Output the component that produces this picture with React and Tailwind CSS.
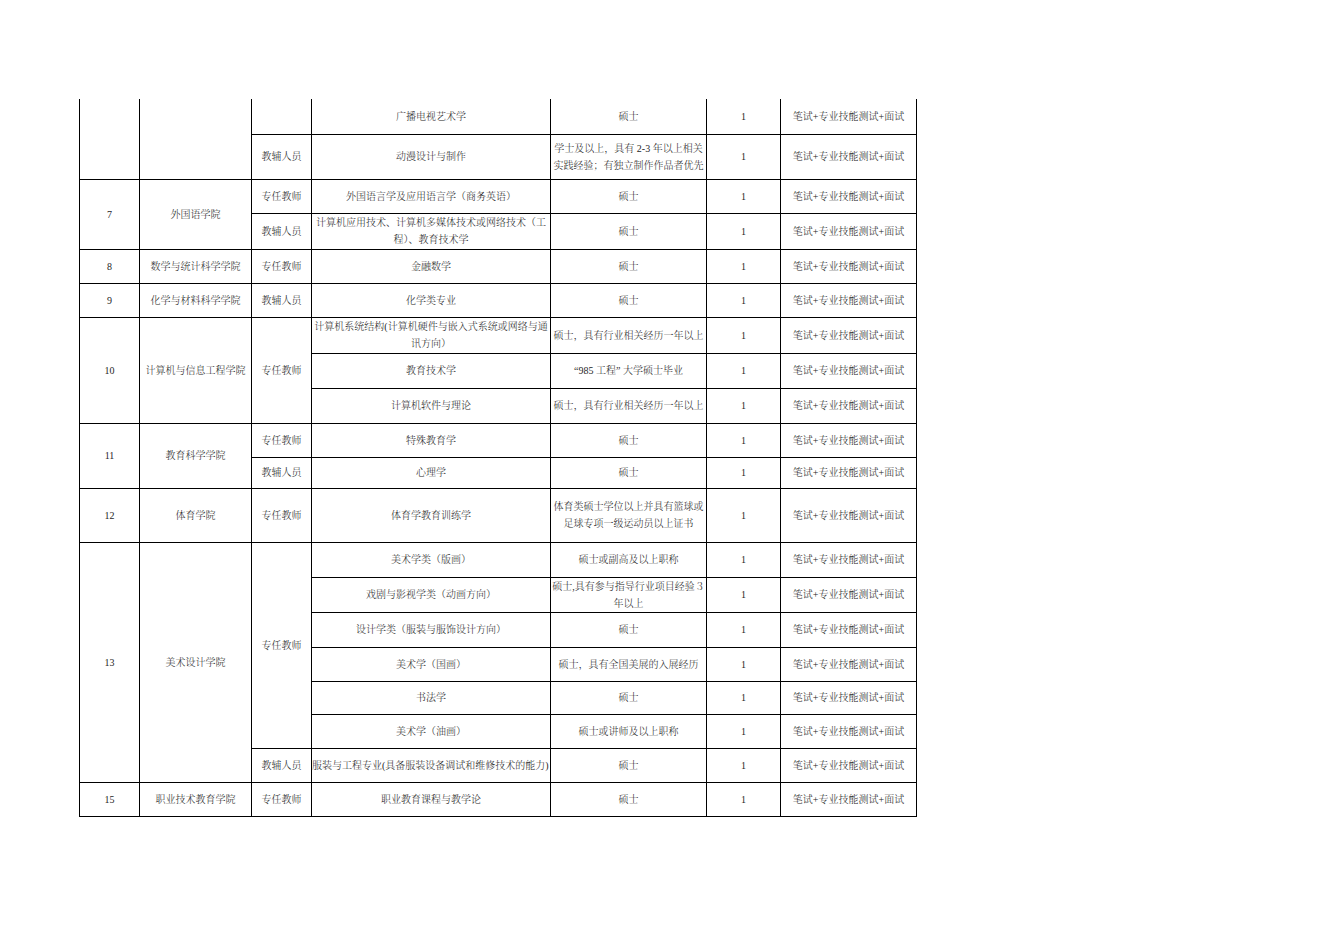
import React from "react";

const F = { fontFamily: '"Liberation Serif", "Noto Serif CJK SC", "Noto Sans CJK SC", serif' };
const EXAM = "笔试+专业技能测试+面试";

function C({ children, rs, top, cls = "" }) {
  return (
    <td
      rowSpan={rs}
      className={`border border-black p-0 text-center align-middle text-[10px] leading-[17px] whitespace-nowrap ${top ? "border-t-0" : ""} ${cls}`}
    >
      {children}
    </td>
  );
}

function Tail({ req, top }) {
  return (
    <>
      <C top={top}>{req}</C>
      <C top={top}>1</C>
      <C top={top}>{EXAM}</C>
    </>
  );
}

export default function App() {
  return (
    <div className="w-[1320px] h-[933px] bg-white overflow-hidden text-[#262626]" style={F}>
      <div className="pt-[99px] pl-[79px]">
        <table className="border-collapse table-fixed w-[837px] font-light">
          <colgroup>
            <col className="w-[60px]" />
            <col className="w-[112px]" />
            <col className="w-[60px]" />
            <col className="w-[239px]" />
            <col className="w-[156px]" />
            <col className="w-[74px]" />
            <col className="w-[136px]" />
          </colgroup>
          <tbody>
            <tr className="h-[35px]">
              <C rs={2} top></C>
              <C rs={2} top></C>
              <C top></C>
              <C top>广播电视艺术学</C>
              <Tail req="硕士" top />
            </tr>
            <tr className="h-[45px]">
              <C>教辅人员</C>
              <C>动漫设计与制作</C>
              <Tail req={<>学士及以上，具有 2-3 年以上相关<br />实践经验；有独立制作作品者优先</>} />
            </tr>
            <tr className="h-[34px]">
              <C rs={2}>7</C>
              <C rs={2}>外国语学院</C>
              <C>专任教师</C>
              <C>外国语言学及应用语言学（商务英语）</C>
              <Tail req="硕士" />
            </tr>
            <tr className="h-[36px]">
              <C>教辅人员</C>
              <C>计算机应用技术、计算机多媒体技术或网络技术（工<br />程）、教育技术学</C>
              <Tail req="硕士" />
            </tr>
            <tr className="h-[34px]">
              <C>8</C>
              <C>数学与统计科学学院</C>
              <C>专任教师</C>
              <C>金融数学</C>
              <Tail req="硕士" />
            </tr>
            <tr className="h-[34px]">
              <C>9</C>
              <C>化学与材料科学学院</C>
              <C>教辅人员</C>
              <C>化学类专业</C>
              <Tail req="硕士" />
            </tr>
            <tr className="h-[36px]">
              <C rs={3}>10</C>
              <C rs={3}>计算机与信息工程学院</C>
              <C rs={3}>专任教师</C>
              <C>计算机系统结构(计算机硬件与嵌入式系统或网络与通<br />讯方向）</C>
              <Tail req="硕士，具有行业相关经历一年以上" />
            </tr>
            <tr className="h-[35px]">
              <C>教育技术学</C>
              <Tail req="“985 工程” 大学硕士毕业" />
            </tr>
            <tr className="h-[35px]">
              <C>计算机软件与理论</C>
              <Tail req="硕士，具有行业相关经历一年以上" />
            </tr>
            <tr className="h-[34px]">
              <C rs={2}>11</C>
              <C rs={2}>教育科学学院</C>
              <C>专任教师</C>
              <C>特殊教育学</C>
              <Tail req="硕士" />
            </tr>
            <tr className="h-[31px]">
              <C>教辅人员</C>
              <C>心理学</C>
              <Tail req="硕士" />
            </tr>
            <tr className="h-[54px]">
              <C>12</C>
              <C>体育学院</C>
              <C>专任教师</C>
              <C>体育学教育训练学</C>
              <Tail req={<>体育类硕士学位以上并具有篮球或<br />足球专项一级运动员以上证书</>} />
            </tr>
            <tr className="h-[35px]">
              <C rs={7}>13</C>
              <C rs={7}>美术设计学院</C>
              <C rs={6}>专任教师</C>
              <C>美术学类（版画）</C>
              <Tail req="硕士或副高及以上职称" />
            </tr>
            <tr className="h-[35px]">
              <C>戏剧与影视学类（动画方向）</C>
              <Tail req={<>硕士,具有参与指导行业项目经验３<br />年以上</>} />
            </tr>
            <tr className="h-[35px]">
              <C>设计学类（服装与服饰设计方向）</C>
              <Tail req="硕士" />
            </tr>
            <tr className="h-[34px]">
              <C>美术学（国画）</C>
              <Tail req="硕士，具有全国美展的入展经历" />
            </tr>
            <tr className="h-[33px]">
              <C>书法学</C>
              <Tail req="硕士" />
            </tr>
            <tr className="h-[34px]">
              <C>美术学（油画）</C>
              <Tail req="硕士或讲师及以上职称" />
            </tr>
            <tr className="h-[34px]">
              <C>教辅人员</C>
              <C cls="overflow-hidden text-left">服装与工程专业(具备服装设备调试和维修技术的能力)</C>
              <Tail req="硕士" />
            </tr>
            <tr className="h-[34px]">
              <C>15</C>
              <C>职业技术教育学院</C>
              <C>专任教师</C>
              <C>职业教育课程与教学论</C>
              <Tail req="硕士" />
            </tr>
          </tbody>
        </table>
      </div>
    </div>
  );
}
